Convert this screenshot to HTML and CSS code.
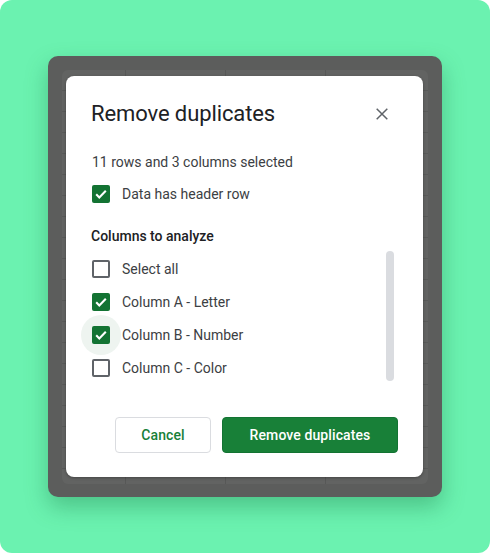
FILE: index.html
```html
<!DOCTYPE html>
<html lang="en">
<head>
<meta charset="utf-8">
<title>Remove duplicates</title>
<link rel="stylesheet" href="styles.css">
</head>
<body>
<div class="card">
  <div class="frame">
    <div class="sheet">
      <div class="dialog">
        <div class="dialog-head">
          <h1 class="title">Remove duplicates</h1>
          <button class="close" aria-label="Close">
            <svg width="12" height="12" viewBox="0 0 12 12"><path d="M0.7 0.7L11.3 11.3M11.3 0.7L0.7 11.3" stroke="#5f6368" stroke-width="1.5" fill="none"/></svg>
          </button>
        </div>
        <p class="summary">11 rows and 3 columns selected</p>
        <div class="row header-row">
          <span class="cb-wrap"><span class="cb checked"><svg viewBox="0 0 18 18" width="18" height="18"><path d="M4.2 9.3l3.1 3.1 6.5-6.6" stroke="#fff" stroke-width="2.1" fill="none"/></svg></span></span>
          <span class="label">Data has header row</span>
        </div>
        <div class="section">Columns to analyze</div>
        <div class="list-wrap">
          <div class="list">
            <div class="row">
              <span class="cb-wrap"><span class="cb"></span></span>
              <span class="label">Select all</span>
            </div>
            <div class="row">
              <span class="cb-wrap"><span class="cb checked"><svg viewBox="0 0 18 18" width="18" height="18"><path d="M4.2 9.3l3.1 3.1 6.5-6.6" stroke="#fff" stroke-width="2.1" fill="none"/></svg></span></span>
              <span class="label">Column A - Letter</span>
            </div>
            <div class="row">
              <span class="cb-wrap hover"><span class="cb checked"><svg viewBox="0 0 18 18" width="18" height="18"><path d="M4.2 9.3l3.1 3.1 6.5-6.6" stroke="#fff" stroke-width="2.1" fill="none"/></svg></span></span>
              <span class="label">Column B - Number</span>
            </div>
            <div class="row">
              <span class="cb-wrap"><span class="cb"></span></span>
              <span class="label">Column C - Color</span>
            </div>
          </div>
          <div class="scrollbar"></div>
        </div>
        <div class="actions">
          <button class="btn btn-cancel">Cancel</button>
          <button class="btn btn-primary">Remove duplicates</button>
        </div>
      </div>
    </div>
  </div>
</div>
</body>
</html>
```

FILE: styles.css
```css
* { box-sizing: border-box; }
html, body { margin: 0; padding: 0; background: #ffffff; }
body { font-family: Roboto, "Liberation Sans", Arial, sans-serif; }

.card {
  width: 490px;
  height: 553px;
  background: #6bf2b0;
  border-radius: 12px;
  padding: 56px 48px 0 48px;
}

.frame {
  height: 441px;
  background: #5c5d5c;
  border-radius: 10px;
  padding: 14px 14px 13px 14px;
  box-shadow: 0 10px 22px rgba(20, 110, 60, 0.35);
}

.sheet {
  height: 414px;
  border-radius: 6px;
  background-color: #626362;
  background-image:
    linear-gradient(to right, transparent 63px, #575857 63px, #575857 64px, transparent 64px, transparent 163px, #575857 163px, #575857 164px, transparent 164px, transparent 263px, #575857 263px, #575857 264px, transparent 264px),
    repeating-linear-gradient(to bottom, transparent 0, transparent 20px, #585958 20px, #585958 21px);
  padding: 6px 5px 7px 4px;
}

.dialog {
  height: 401px;
  background: #ffffff;
  border-radius: 8px;
  box-shadow: 0 1px 3px rgba(0,0,0,0.3);
  padding: 24px 25px 24px 25px;
  display: flex;
  flex-direction: column;
}

.dialog-head {
  display: flex;
  align-items: center;
  justify-content: space-between;
  height: 28px;
}

.title {
  margin: 0;
  font-family: Roboto, "Open Sans", sans-serif;
  font-weight: 400;
  font-size: 22px;
  line-height: 28px;
  color: #202124;
  letter-spacing: -0.1px;
}

.close {
  width: 24px;
  height: 24px;
  border: 0;
  background: none;
  padding: 0;
  margin-right: 4px;
  display: flex;
  align-items: center;
  justify-content: center;
}

.summary {
  margin: 24px 0 0 1px;
  font-size: 14px;
  line-height: 20px;
  color: #3c4043;
}

.row {
  display: flex;
  align-items: center;
  height: 33px;
  gap: 12px;
  padding-left: 1px;
}

.header-row { margin-top: 5px; height: 34px; }

.label {
  font-size: 14px;
  color: #3c4043;
  line-height: 20px;
}

.cb-wrap {
  position: relative;
  width: 18px;
  height: 18px;
  flex: none;
}

.cb-wrap.hover::before {
  content: "";
  position: absolute;
  left: -11px;
  top: -11px;
  width: 40px;
  height: 40px;
  border-radius: 50%;
  background: #eef4f0;
}

.cb {
  position: relative;
  display: block;
  width: 18px;
  height: 18px;
  border: 2px solid #5f6368;
  border-radius: 2px;
  background: #fff;
}

.cb.checked {
  border: 0;
  background: #137333;
}

.cb svg { display: block; }

.section {
  margin-top: 15px;
  font-size: 14px;
  line-height: 20px;
  font-weight: 500;
  color: #202124;
}

.list-wrap {
  display: flex;
  justify-content: space-between;
  margin-top: 6px;
}

.list { flex: 1; }

.scrollbar {
  width: 8px;
  height: 130px;
  margin-top: -1px;
  margin-right: 4px;
  background: #dadce0;
  border-radius: 4px;
}

.actions {
  margin-top: auto;
  display: flex;
  justify-content: flex-end;
  gap: 11px;
}

.btn {
  height: 36px;
  border-radius: 4px;
  font-family: Roboto, "Liberation Sans", sans-serif;
  font-size: 14px;
  font-weight: 500;
  letter-spacing: 0.1px;
  cursor: pointer;
}

.btn-cancel {
  width: 96px;
  background: #fff;
  border: 1px solid #dadce0;
  color: #188038;
}

.btn-primary {
  width: 176px;
  background: #188038;
  border: 1px solid #137333;
  color: #fff;
}
```
